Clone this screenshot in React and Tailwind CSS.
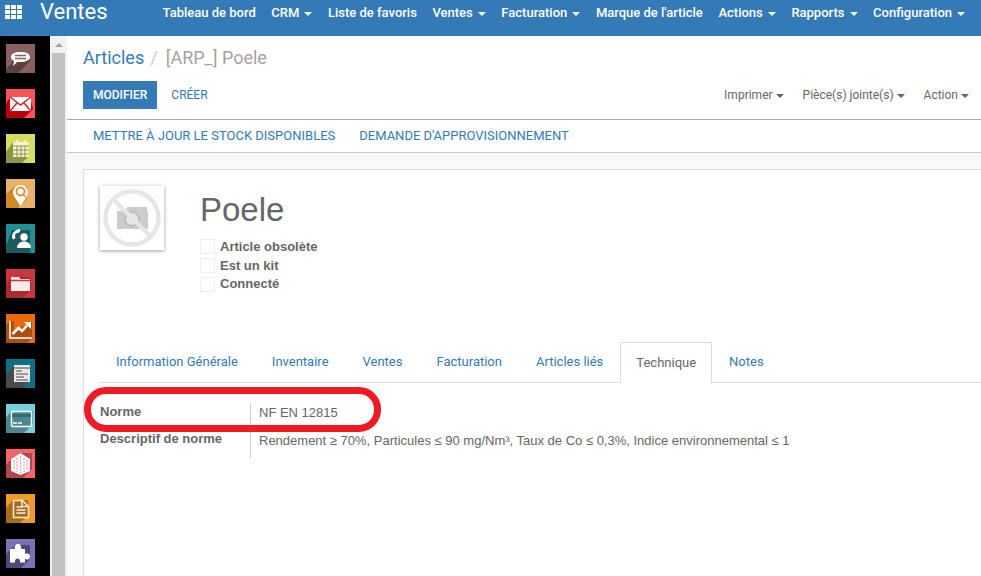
const NAV = [
  { label: "Tableau de bord" },
  { label: "CRM", caret: true },
  { label: "Liste de favoris" },
  { label: "Ventes", caret: true },
  { label: "Facturation", caret: true },
  { label: "Marque de l'article" },
  { label: "Actions", caret: true },
  { label: "Rapports", caret: true },
  { label: "Configuration", caret: true },
];

const TABS = ["Information Générale", "Inventaire", "Ventes", "Facturation", "Articles liés", "Technique", "Notes"];

// sidebar app tiles, each one is a coloured square with a long shadow and a white glyph
const APPS = [
  {
    bg: "#8a5f5f",
    shade: "#5b4040",
    shadow: "M5 20L9 10H24V17L12 29H0V25Z",
    glyph: (
      <>
        <path d="M5 13c0-3.500 4-5 9.500-5s9.500 1.500 9.500 5-4 5-9.500 5c-1 0-2 0-3-.2L7 22l1-5c-2-1-3-2.500-3-4z" fill="#fff" />
        <path d="M9 11.500h11M9 14.500h11" stroke="#8a5f5f" strokeWidth="1.500" />
      </>
    ),
  },
  {
    bg: "#f9535a",
    shade: "#b8000d",
    shadow: "M0 29V14L4 9H24L27 20L18 29Z",
    glyph: (
      <>
        <rect x="4" y="8" width="21" height="14" fill="#fff" />
        <path d="M4 8l10.500 8L25 8M4 22l7-8M25 22l-7-8" stroke="#d9202b" strokeWidth="1.500" fill="none" />
      </>
    ),
  },
  {
    bg: "#d6de62",
    shade: "#8f9445",
    shadow: "M0 29V18L7 8H23V22L16 29Z",
    glyph: (
      <>
        <rect x="7" y="8" width="16" height="15" fill="#f4f3d4" />
        <path d="M7 12h16M11 12v11M15 12v11M19 12v11M7 16h16M7 20h16" stroke="#8f9445" strokeWidth="1" />
        <path d="M11 6v4M19 6v4" stroke="#f4f3d4" strokeWidth="2" />
      </>
    ),
  },
  {
    bg: "#e8b268",
    shade: "#cf8a24",
    shadow: "M0 29V15L8 8H21V20L12 29Z",
    glyph: (
      <>
        <path d="M14.500 27l-6-9a7.500 7.500 0 1 1 12 0z" fill="#fff" />
        <circle cx="14.500" cy="12.500" r="4" fill="none" stroke="#d9963c" strokeWidth="2" />
        <path d="M16.500 15l3 3" stroke="#d9963c" strokeWidth="1.500" />
      </>
    ),
  },
  {
    bg: "#1f9096",
    shade: "#1d5a5e",
    shadow: "M0 22L6 6H24V29H0Z",
    glyph: (
      <>
        <path d="M14 5c-5 .5-8 4-8 8 0 1 .5 2 1.500 2.500l2-1.500-.7-3c1-1.500 2.500-2.500 4.500-2.500l1-1.500z" fill="#fff" />
        <circle cx="18" cy="13" r="3.700" fill="#fff" />
        <path d="M11 24c0-4 3-6.500 7-6.500s7 2.500 7 6.500z" fill="#fff" />
      </>
    ),
  },
  {
    bg: "#c9363d",
    shade: "#a92c32",
    shadow: "M0 29V14L6 8H25V21L17 29Z",
    glyph: (
      <>
        <path d="M5 8h8l1.500 2H24v12H5z" fill="#f7eaea" />
        <path d="M5 11.500h19" stroke="#c9363d" strokeWidth="1.500" />
      </>
    ),
  },
  {
    bg: "#ea6a0c",
    shade: "#a9500f",
    shadow: "M0 29V12L4 7H8V20L16 13L26 8V24H26L21 29Z",
    glyph: (
      <>
        <path d="M4 7v17h22" fill="none" stroke="#fff" strokeWidth="1.500" />
        <path d="M6.500 20l6-6 3.500 3 5-5.500" fill="none" stroke="#fff" strokeWidth="2.500" />
        <path d="M18 8h7v7z" fill="#fff" />
      </>
    ),
  },
  {
    bg: "#0e7183",
    shade: "#4a4a4a",
    shadow: "M0 29V16L8 6H24V21L16 29Z",
    glyph: (
      <>
        <rect x="8" y="6" width="16" height="17" fill="#e8e8e8" />
        <path d="M8 9h16M10 12h6M10 15h12M10 18h8M10 21h12" stroke="#4a4a4a" strokeWidth="1" />
      </>
    ),
  },
  {
    bg: "#76cfdc",
    shade: "#4d868f",
    shadow: "M0 29V14L5 7H27V20L18 29Z",
    glyph: (
      <>
        <rect x="5.500" y="7.500" width="20" height="15" rx="1" fill="#4d868f" stroke="#fff" strokeWidth="1.500" />
        <rect x="6" y="10" width="19" height="3" fill="#2f6b74" />
        <path d="M7 19h4M12 19h4" stroke="#fff" strokeWidth="1.500" />
      </>
    ),
  },
  {
    bg: "#fb6366",
    shade: "#ad4748",
    shadow: "M0 29V16L6 9L14 4H26V20L17 29Z",
    glyph: (
      <>
        <path d="M5 10l9.500-6L24 10v12l-9.500 4L5 22z" fill="#fff" />
        <path d="M8 11v10M11 9v14M14.500 7v17M18 9v14M21 11v10" stroke="#fb6366" strokeWidth="0.800" strokeDasharray="2 1.200" />
      </>
    ),
  },
  {
    bg: "#ef9a24",
    shade: "#a86d1c",
    shadow: "M0 29V14L7 6H22L23 20L14 29Z",
    glyph: (
      <>
        <path d="M7.500 6.500h9l6 6v11h-15z" fill="#a86d1c" stroke="#f7eada" strokeWidth="1.500" />
        <path d="M16 6.500v6h6.500" fill="none" stroke="#f7eada" strokeWidth="1.500" />
        <path d="M10.500 13h6M10.500 16h9M10.500 19h9" stroke="#f7eada" strokeWidth="1.500" />
      </>
    ),
  },
  {
    bg: "#7a72b4",
    shade: "#4e4978",
    shadow: "M0 29V15L9 6H24V20L15 29Z",
    glyph: (
      <path d="M4 10h5c-1-3 1-5 3-5s4 2 3 5h4v5c3-1 5 0 5 2.500s-2 3.500-5 2.500v3.500h-5c.5-3-1-4-2.500-4s-3 1-2.500 4H4z" fill="#fff" />
    ),
  },
];

function AppTile({ app }) {
  return (
    <svg width="29" height="29" viewBox="0 0 29 29" className="block shrink-0">
      <rect width="29" height="29" fill={app.bg} />
      <path d={app.shadow} fill={app.shade} />
      {app.glyph}
    </svg>
  );
}

function Caret({ className }) {
  return <span className={`inline-block h-0 w-0 border-x-[4px] border-t-[4px] border-x-transparent align-middle ${className}`} />;
}

function CheckRow({ label }) {
  return (
    <div className="flex h-[19px] items-center last:h-[18px]">
      <span className="h-[15px] w-[15px] border border-[#eeeeee] bg-white" />
      <span className="ml-[5px] font-['Liberation_Sans',sans-serif] text-[13px] font-bold text-[#666666]">{label}</span>
    </div>
  );
}

export default function App() {
  return (
    <div className="flex h-[576px] w-[981px] flex-col overflow-hidden bg-white font-['Roboto',sans-serif]">
      {/* Top bar */}
      <header className="flex h-[36px] shrink-0 items-start bg-[#337ab7] text-white">
        <svg width="18" height="14" viewBox="0 0 18 14" className="ml-[5px] mt-[5px] shrink-0" fill="#fff">
          {[0, 5, 10].map((y) =>
            [0, 6, 12].map((x) => <rect key={`${x}-${y}`} x={x} y={y} width="5" height="4" />)
          )}
        </svg>
        <div className="ml-[17px] text-[22px] leading-[24px]">Ventes</div>
        <nav className="ml-[55px] flex gap-[15.6px] pt-[5px] text-[13px] font-medium leading-[16px]">
          {NAV.map((item) => (
            <span key={item.label} className="whitespace-nowrap">
              {item.label}
              {item.caret && <Caret className="ml-[5px] border-t-white" />}
            </span>
          ))}
        </nav>
      </header>

      <div className="flex min-h-0 flex-1">
        {/* App launcher */}
        <aside className="flex w-[50px] shrink-0 flex-col gap-[16px] bg-black pl-[6px] pt-[8px]">
          {APPS.map((app) => (
            <AppTile key={app.bg} app={app} />
          ))}
        </aside>

        {/* Scrollbar */}
        <div className="flex w-[17px] shrink-0 flex-col bg-[#f1f1f1] pl-[2px]">
          <div className="flex h-[17px] w-[13px] items-center justify-center">
            <span className="h-0 w-0 border-x-[4px] border-b-[4px] border-x-transparent border-b-[#a3a3a3]" />
          </div>
          <div className="w-[13px] flex-1 bg-[#c1c1c1]" />
        </div>

        <main className="relative flex min-w-0 flex-1 flex-col">
          {/* Control panel */}
          <div className="h-[84px] shrink-0 border-b border-[#aaaaaa] bg-white pl-[16px] pr-[12px]">
            <div className="pt-[10px] text-[18px] leading-[24px] text-[#337ab7]">
              Articles<span className="mx-[6px] text-[#cccccc]">/</span>
              <span className="ml-[2px] text-[#a89f9f]">[ARP_] Poele</span>
            </div>
            <div className="mt-[11px] flex items-center">
              <button className="h-[28px] bg-[#337ab7] px-[10px] text-[12px] font-medium text-white">MODIFIER</button>
              <button className="ml-[4px] h-[28px] px-[10px] text-[12px] text-[#337ab7]">CRÉER</button>
              <div className="ml-auto flex gap-[19px] text-[12px] text-[#666666]">
                <span>Imprimer<Caret className="ml-[3px] border-t-[#666666]" /></span>
                <span>Pièce(s) jointe(s)<Caret className="ml-[3px] border-t-[#666666]" /></span>
                <span>Action<Caret className="ml-[3px] border-t-[#666666]" /></span>
              </div>
            </div>
          </div>

          {/* Status bar */}
          <div className="flex h-[33px] shrink-0 items-center gap-[24px] border-b border-[#cccccc] bg-white pl-[26px] text-[13px] text-[#337ab7]">
            <span>METTRE À JOUR LE STOCK DISPONIBLES</span>
            <span>DEMANDE D'APPROVISIONNEMENT</span>
          </div>

          {/* Sheet */}
          <div className="min-h-0 flex-1 overflow-hidden bg-[#f9f9f9] pl-[16px] pt-[16px]">
            <div className="relative h-[600px] w-[1000px] border border-[#dddddd] bg-white">
              <div className="flex pl-[16px] pt-[16px]">
                <div className="flex h-[64px] w-[64px] items-center justify-center bg-white shadow-[0_1px_4px_rgba(0,0,0,0.4)]">
                  <svg width="58" height="58" viewBox="0 0 58 58">
                    <path d="M14 22h9l1-4h20v4h1v18H14z" fill="#cccccc" />
                    <circle cx="29" cy="30" r="8" fill="#bdbdbd" />
                    <circle cx="29" cy="30" r="6" fill="#e6e6e6" />
                    <circle cx="29" cy="29" r="26.500" fill="none" stroke="#e6e6e6" strokeWidth="4.500" />
                    <path d="M10 10l38 38" stroke="#e6e6e6" strokeWidth="4.500" />
                  </svg>
                </div>
                <div className="ml-[36px]">
                  <h1 className="mt-[4px] font-['Liberation_Sans',sans-serif] text-[33px] leading-[40px] text-[#666666]">Poele</h1>
                  <div className="mt-[7px]">
                    <CheckRow label="Article obsolète" />
                    <CheckRow label="Est un kit" />
                    <CheckRow label="Connecté" />
                  </div>
                </div>
              </div>

              {/* Tabs */}
              <div className="ml-[15px] mt-[49px] flex h-[41px] items-stretch border-b border-[#dddddd] text-[13px]">
                {TABS.map((tab) =>
                  tab === "Technique" ? (
                    <span key={tab} className="-mb-px flex items-center border border-b-0 border-[#dddddd] bg-white px-[15px] text-[#666666]">
                      {tab}
                    </span>
                  ) : (
                    <span key={tab} className="flex items-center px-[17px] text-[#337ab7]">
                      {tab}
                    </span>
                  )
                )}
              </div>

              {/* Technical fields */}
              <div className="ml-[16px] mt-[20px] grid w-[760px] grid-cols-[150px_1fr] font-['Liberation_Sans',sans-serif] text-[13px] leading-[20px] text-[#666666]">
                <div className="-mt-px font-bold">Norme</div>
                <div className="h-[27px] border-l border-[#cccccc] pl-[8px]">NF EN 12815</div>
                <div className="-mt-px font-bold">Descriptif de norme</div>
                <div className="h-[28px] border-l border-[#cccccc] pl-[8px] pt-[1px]">
                  Rendement ≥ 70%, Particules ≤ 90 mg/Nm³, Taux de Co ≤ 0,3%, Indice environnemental ≤ 1
                </div>
              </div>

              {/* Red annotation around the field */}
              <div className="absolute left-[0px] top-[217px] h-[45px] w-[297px] rounded-[22px] border-[7px] border-[#ed1c24]" />
            </div>
          </div>
        </main>
      </div>
    </div>
  );
}
